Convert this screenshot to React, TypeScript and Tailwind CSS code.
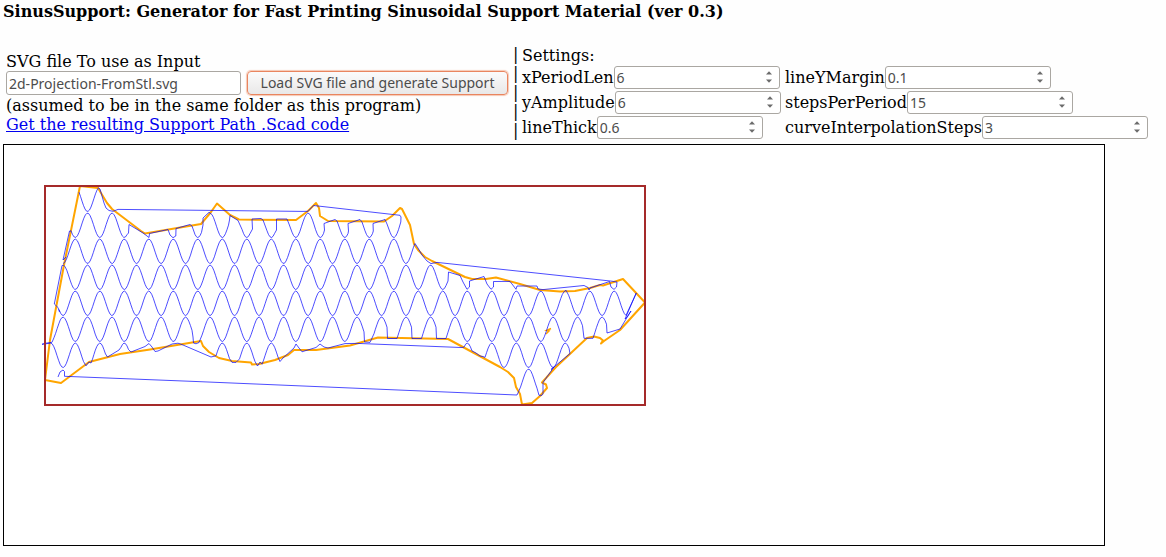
import { useId, useState } from "react";

type Point = [number, number];

const PERIOD = 24.5;
const TOP = 187.1;
const PITCH = 26;
const SWING = 24.4;
const EVEN_CREST = 75.3;
const ODD_CREST = 87.55;

// Samples support row `row` between x0 and x1. Neighbouring rows are half a period apart.
function wave(row: number, x0: number, x1: number): Point[] {
  const crest = row % 2 === 0 ? EVEN_CREST : ODD_CREST;
  const points: Point[] = [];
  const count = Math.max(2, Math.ceil((x1 - x0) / 1.6));
  for (let i = 0; i <= count; i++) {
    const x = x0 + ((x1 - x0) * i) / count;
    const y =
      TOP + row * PITCH + (SWING / 2) * (1 - Math.cos((2 * Math.PI * (x - crest)) / PERIOD));
    points.push([x, y]);
  }
  return points;
}

const toPath = (points: Point[]) =>
  "M" + points.map(([x, y]) => `${x.toFixed(1)} ${y.toFixed(1)}`).join("L");

const supportRows: Point[][] = [
  [
    ...wave(0, 79, 98.5), [100, 189], [104, 203], [106, 208], [109, 210.5], [113, 211.3],
    [118, 209.4], [302, 211.4], [308, 211.3], [313.5, 205.5], [400, 215.3], [401, 217],
    [400.8, 222], ...wave(1, 390, 398.5).reverse(), [387, 224], [385, 219.5], [373, 223.5],
    [373.3, 231], ...wave(1, 365, 372.5).reverse(), [362, 222], [360, 219.5], [348, 223.5],
    [348.5, 231], ...wave(1, 340.5, 348).reverse(), [337, 221], [335, 219.5], [324, 223.5],
    [324.5, 230], ...wave(1, 292, 323.5).reverse(), [289, 224], [287, 219], [276.5, 219],
    [276.5, 230], ...wave(1, 267, 274.5).reverse(), [263, 220], [261, 218.5], [252, 219],
    [252.5, 229], ...wave(1, 242, 250).reverse(), [238, 220.5], [230, 215.5], [229.5, 220],
    ...wave(1, 212, 228.5).reverse(), [209, 212.3], [203, 218], [203, 225],
    ...wave(1, 195, 201.5).reverse(), [192, 226], [190, 224.5], [176, 228.5], [175.8, 236],
    [173, 237.7], [170, 235], [168, 229.5], [149.5, 233.5], [149, 237.5], [143, 233],
    [129, 224.5], [128.5, 233], ...wave(1, 71, 127).reverse(), [71, 231], [69.5, 231], [63, 260],
    [66, 257],
  ],
  [
    ...wave(2, 63, 413.5), [415, 243.5], [418, 248], [422, 255], [427, 261],
    [431, 263.6], [437, 262.4], [612, 281.2], [617, 282], [616.5, 287], [614, 289.4],
    [611, 287], [609.5, 281.5], [590, 288], [589, 290], [588, 287.5], [584, 285.5], [543, 289.6],
    [538, 289], [537, 286], [517, 286], [516, 289.3], [512, 284], [510, 281.4], [493.5, 281.5],
    [493.5, 287], [491, 289.3], [487, 284], [484, 276.5], [469.5, 281], [469.5, 287],
    [467, 289.3], [463, 282], [460, 275.5], [448.5, 272], [448, 281],
    ...wave(3, 62, 446).reverse(), [54.3, 304], [58, 307.5], [59.5, 312],
  ],
  [...wave(4, 59, 564), [566, 290.2], ...wave(4, 567, 626), [636.3, 293], [625, 319], [627, 317],
    [631, 311], [620, 329], [607, 333], ...wave(5, 595, 606.5).reverse(), [593, 338.3],
    [584, 338.3], ...wave(5, 448, 582.5).reverse(), [446, 338.5], [436.5, 338.5],
    ...wave(5, 423, 436).reverse(), [421.5, 338.5], [412, 338.5], ...wave(5, 399, 411.5).reverse(),
    [397, 338.5], [387.5, 338.5], ...wave(5, 374, 387).reverse(), [370, 342.4], [364.5, 342],
    ...wave(5, 202, 364).reverse(), [199, 342.5], [196, 343.8], [193.5, 343], [193, 337],
    ...wave(5, 54, 192).reverse(), [52, 342.3], [45, 343.3], [42, 344.3],
  ],
  [
    [42, 344.3], ...wave(6, 50.8, 83.5), [86, 365.8], [89, 362], ...wave(6, 91, 105.5),
    [107.5, 357], [119, 350], ...wave(6, 121, 128.5), [131, 352], [145, 346.5], [149, 343.5],
    [152, 347], [155, 351.5], [158, 351], [172, 344], [178, 343.2], [183, 345], [211, 357],
    [215, 356], ...wave(6, 216, 229.5), [232, 362.4], [236, 362.4], ...wave(6, 239.5, 255),
    [257.5, 366], [260, 362], ...wave(6, 262, 278), [280, 361.5], [283, 358], [294, 348],
    [296, 344], [299, 348], [302, 351.8], [306, 350.5], [316, 347.5], [320, 344], [324, 347],
    [328, 348], [345, 343.6], [357, 343.4], [461, 347.5], ...wave(6, 464, 472), [476, 353],
    [480, 356], [483, 356.5], ...wave(6, 485, 569), [570, 353.5], [551, 369.5], [554, 367],
    [543, 382.5], [543, 394], [542, 395.3], [539, 395.3], ...wave(7, 519, 537).reverse(),
    [517, 395], [512, 394.8], [196, 381.5], [64.5, 376.3], [64.5, 371.5], [63, 370], [60, 372],
    [58, 377],
  ],
];

const outline =
  "M80 186L98 188L107 203L112 209L141 231L145 233.5L189 226L201 224L211 212L217 203.5L230 215L239 219.5L296 220L308 211L316 203L319 208L320 216L328 221L384 221.5L392 216L400 208L402 209L410 225L414 244L418 250L425 257L432 261L465 277L472 279L486 279L496 277.5L520 284L540 290L560 291.5L575 291L590 288L600 285L603 285.5L623 279L645 302.5L620 330L604 341L601 343.5L603 340.5L600 338L594 336.5L587 338L556 367L542 382.5L546 384.5L547 388L540 396L532 403L522 404.5L520 394L516 387L514 378L508 372L500 367L448 339L378 337.5L350 345.5L316 350L294 350L288 355L275 360L259 364L252 364.5L251 362.5L232 361L219 358L209 352L203 346L201 341L195 342L150 349.5L120 354L89 362L61 383L45 380L50 340L64 265Z";

const controlText = "font-['Noto_Sans',sans-serif] text-sm text-[#4c4c4c]";

function NumberField({ label, initial, step }: { label: string; initial: number; step: number }) {
  const id = useId();
  const [value, setValue] = useState(String(initial));
  const nudge = (by: number) => setValue(String(Number((Number(value) + by).toFixed(3))));
  return (
    <div className="flex h-[25px] items-center">
      <label htmlFor={id}>{label}</label>
      <div className="flex h-[23px] w-[166px] shrink-0 items-center rounded-[3px] border border-[#aaa7a2] bg-white">
        <input
          id={id}
          type="number"
          step={step}
          value={value}
          onChange={(e) => setValue(e.target.value)}
          className={`${controlText} h-full min-w-0 flex-1 [appearance:textfield] pl-0.5 outline-none [&::-webkit-inner-spin-button]:appearance-none`}
        />
        <div className="flex w-4 flex-col items-center gap-1 pr-1">
          <button type="button" aria-label={`Increase ${label}`} onClick={() => nudge(step)}>
            <svg className="block h-1 w-1.5" viewBox="0 0 6 4">
              <path d="M0 3.5L3 .2L6 3.5Z" fill="#6b6b6b" />
            </svg>
          </button>
          <button type="button" aria-label={`Decrease ${label}`} onClick={() => nudge(-step)}>
            <svg className="block h-1 w-1.5" viewBox="0 0 6 4">
              <path d="M0 .5L3 3.8L6 .5Z" fill="#6b6b6b" />
            </svg>
          </button>
        </div>
      </div>
    </div>
  );
}

export default function App() {
  return (
    <main className="min-h-screen bg-[#fefefe] px-[3px] pt-0.5 font-['DejaVu_Serif',serif] text-base leading-[19px] text-black">
      <h1 className="font-bold">
        SinusSupport: Generator for Fast Printing Sinusoidal Support Material (ver 0.3)
      </h1>
      <div className="mt-6 flex items-center pl-[3px]">
        <form className="w-[507px] shrink-0" onSubmit={(e) => e.preventDefault()}>
          <label htmlFor="svg-file" className="block">
            SVG file To use as Input
          </label>
          <div className="flex h-[25px] items-center gap-1.5">
            <input
              id="svg-file"
              type="text"
              defaultValue="2d-Projection-FromStl.svg"
              className={`${controlText} h-6 w-[235px] rounded-[3px] border border-[#aaa7a2] bg-white px-0.5 outline-none`}
            />
            <button
              type="submit"
              className={`${controlText} h-6 w-[261px] rounded border border-[#e9855f] bg-linear-to-b from-[#fbfbfb] to-[#e9e8e8] whitespace-nowrap shadow-[0_0_1px_1px_#f6c8b4]`}
            >
              Load SVG file and generate Support
            </button>
          </div>
          <p>(assumed to be in the same folder as this program)</p>
          <a href="#support-path" className="text-[#0000ee] underline">
            Get the resulting Support Path .Scad code
          </a>
        </form>
        <div aria-hidden="true" className="w-[9px] shrink-0">
          {[0, 1, 2, 3, 4].map((i) => (
            <div key={i}>|</div>
          ))}
        </div>
        <section>
          <h2>Settings:</h2>
          <div className="grid grid-cols-[263px_auto]">
            <NumberField label="xPeriodLen" initial={6} step={1} />
            <NumberField label="lineYMargin" initial={0.1} step={0.1} />
            <NumberField label="yAmplitude" initial={6} step={1} />
            <NumberField label="stepsPerPeriod" initial={15} step={1} />
            <NumberField label="lineThick" initial={0.6} step={0.1} />
            <NumberField label="curveInterpolationSteps" initial={3} step={1} />
          </div>
        </section>
      </div>
      <div id="support-path" className="mt-1 max-w-[1102px] border border-black bg-white">
        <svg className="block w-full" viewBox="4 145 1100 400" fill="none">
          <path d={outline} stroke="orange" strokeWidth="2" strokeLinejoin="round" />
          <path d="M551 328.5L546.5 330.5L549 331L546 334" stroke="orange" strokeWidth="1.5" />
          {supportRows.map((row, i) => (
            <path key={i} d={toPath(row)} stroke="#0000ff" strokeWidth="0.7" />
          ))}
          <rect x="45" y="186" width="600" height="219" stroke="brown" strokeWidth="2" />
        </svg>
      </div>
    </main>
  );
}
